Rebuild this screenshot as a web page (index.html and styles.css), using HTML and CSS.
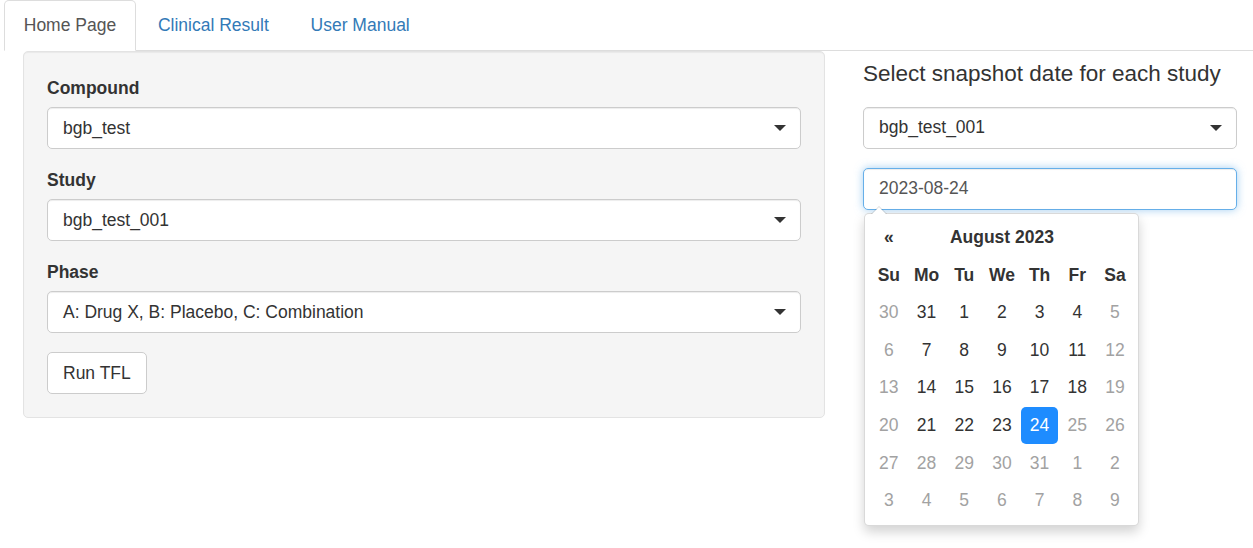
FILE: index.html
```html
<!DOCTYPE html>
<html>
<head>
<meta charset="utf-8">
<link rel="stylesheet" href="styles.css">
</head>
<body>
<div class="page">
  <ul class="tabs">
    <li class="tab active"><a>Home Page</a></li>
    <li class="tab"><a>Clinical Result</a></li>
    <li class="tab"><a>User Manual</a></li>
  </ul>
  <div class="content">
    <div class="well">
      <div class="group">
        <label class="label">Compound</label>
        <div class="select"><span>bgb_test</span><span class="caret"></span></div>
      </div>
      <div class="group">
        <label class="label">Study</label>
        <div class="select"><span>bgb_test_001</span><span class="caret"></span></div>
      </div>
      <div class="group">
        <label class="label">Phase</label>
        <div class="select"><span>A: Drug X, B: Placebo, C: Combination</span><span class="caret"></span></div>
      </div>
      <button class="btn">Run TFL</button>
    </div>
    <div class="side">
      <h4 class="heading">Select snapshot date for each study</h4>
      <div class="group">
        <div class="select"><span>bgb_test_001</span><span class="caret"></span></div>
      </div>
      <div class="date-wrap">
        <div class="date-input">2023-08-24</div>
        <div class="picker">
          <table class="cal">
            <thead>
              <tr class="cal-head"><th class="nav">&laquo;</th><th colspan="5" class="month">August 2023</th><th class="nav hidden">&raquo;</th></tr>
              <tr class="dow"><th>Su</th><th>Mo</th><th>Tu</th><th>We</th><th>Th</th><th>Fr</th><th>Sa</th></tr>
            </thead>
            <tbody>
              <tr><td class="off">30</td><td>31</td><td>1</td><td>2</td><td>3</td><td>4</td><td class="off">5</td></tr>
              <tr><td class="off">6</td><td>7</td><td>8</td><td>9</td><td>10</td><td>11</td><td class="off">12</td></tr>
              <tr><td class="off">13</td><td>14</td><td>15</td><td>16</td><td>17</td><td>18</td><td class="off">19</td></tr>
              <tr><td class="off">20</td><td>21</td><td>22</td><td>23</td><td class="sel"><span>24</span></td><td class="off">25</td><td class="off">26</td></tr>
              <tr><td class="off">27</td><td class="off">28</td><td class="off">29</td><td class="off">30</td><td class="off">31</td><td class="off">1</td><td class="off">2</td></tr>
              <tr><td class="off">3</td><td class="off">4</td><td class="off">5</td><td class="off">6</td><td class="off">7</td><td class="off">8</td><td class="off">9</td></tr>
            </tbody>
          </table>
        </div>
      </div>
    </div>
  </div>
</div>
</body>
</html>
```
FILE: styles.css
```css
html, body {
  margin: 0;
  padding: 0;
  background: #fff;
}
body {
  font-family: "Liberation Sans", Arial, Helvetica, sans-serif;
  font-size: 17.5px;
  color: #333;
  min-height: 548px;
}
.page {
  padding-left: 4px;
}
.tabs {
  list-style: none;
  margin: 0;
  padding: 0;
  display: flex;
  height: 50px;
  border-bottom: 1px solid #ddd;
}
.tab {
  margin-right: 2.5px;
  margin-bottom: -1px;
}
.tab a {
  display: block;
  line-height: 24px;
  padding: 12px 18.5px 13px 18.75px;
  border: 1px solid transparent;
  border-radius: 5px 5px 0 0;
  color: #337ab7;
}
.tab.active a {
  color: #555;
  background: #fff;
  border-color: #ddd #ddd transparent #ddd;
}
.content {
  display: grid;
  grid-template-columns: 802px 374px;
  column-gap: 38px;
  padding-left: 19px;
  align-items: start;
}
.well {
  background: #f5f5f5;
  border: 1px solid #e3e3e3;
  border-radius: 5px;
  box-shadow: inset 0 1px 1px rgba(0,0,0,.05);
  padding: 24px 23px 23px 23px;
}
.group {
  margin-bottom: 19px;
}
.label {
  display: block;
  font-weight: bold;
  line-height: 24px;
  margin-bottom: 7px;
}
.select {
  height: 42px;
  box-sizing: border-box;
  border: 1px solid #ccc;
  border-radius: 5px;
  background: #fff;
  display: flex;
  align-items: center;
  justify-content: space-between;
  padding: 0 14px 0 15px;
  box-shadow: inset 0 1px 1px rgba(0,0,0,.075);
}
.caret {
  width: 0;
  height: 0;
  border-style: solid;
  border-width: 6px 6px 0 6px;
  border-color: #333 transparent transparent transparent;
}
.btn {
  display: block;
  font-family: inherit;
  font-size: 17.5px;
  color: #333;
  background: #fff;
  border: 1px solid #ccc;
  border-radius: 5px;
  height: 42px;
  padding: 0 15px;
}
.side {
  padding-top: 11px;
}
.heading {
  margin: 0 0 20px 0;
  font-size: 22.5px;
  font-weight: normal;
  line-height: 24.75px;
  color: #333;
}
.date-input {
  height: 42px;
  box-sizing: border-box;
  border: 1px solid #66afe9;
  border-radius: 5px;
  background: #fff;
  padding: 0 15px;
  display: flex;
  align-items: center;
  color: #555;
  box-shadow: inset 0 1px 1px rgba(0,0,0,.075), 0 0 8px rgba(102,175,233,.6);
}
.picker {
  position: relative;
  margin: 3px 0 0 1px;
  width: 275px;
  box-sizing: border-box;
  background: #fff;
  border: 1px solid rgba(0,0,0,.15);
  border-radius: 5px;
  box-shadow: 0 6px 12px rgba(0,0,0,.175);
  padding: 5px 4px 5px 5px;
}
.picker::before {
  content: "";
  position: absolute;
  top: -8px;
  left: 6px;
  border-left: 8px solid transparent;
  border-right: 8px solid transparent;
  border-bottom: 8px solid rgba(0,0,0,.15);
}
.picker::after {
  content: "";
  position: absolute;
  top: -7px;
  left: 7px;
  border-left: 7px solid transparent;
  border-right: 7px solid transparent;
  border-bottom: 7px solid #fff;
}
.cal {
  border-collapse: collapse;
  border-spacing: 0;
}
.cal th, .cal td {
  width: 37.7px;
  height: 37.6px;
  padding: 0;
  text-align: center;
  vertical-align: middle;
  font-size: 17.5px;
}
.cal th {
  font-weight: bold;
}
.cal .nav.hidden {
  visibility: hidden;
}
.cal td.off {
  color: #a2a2a2;
}
.cal td.sel span {
  display: flex;
  align-items: center;
  justify-content: center;
  width: 37.5px;
  height: 37.6px;
  border-radius: 5px;
  background: #1e8cff;
  color: #fff;
}
```
